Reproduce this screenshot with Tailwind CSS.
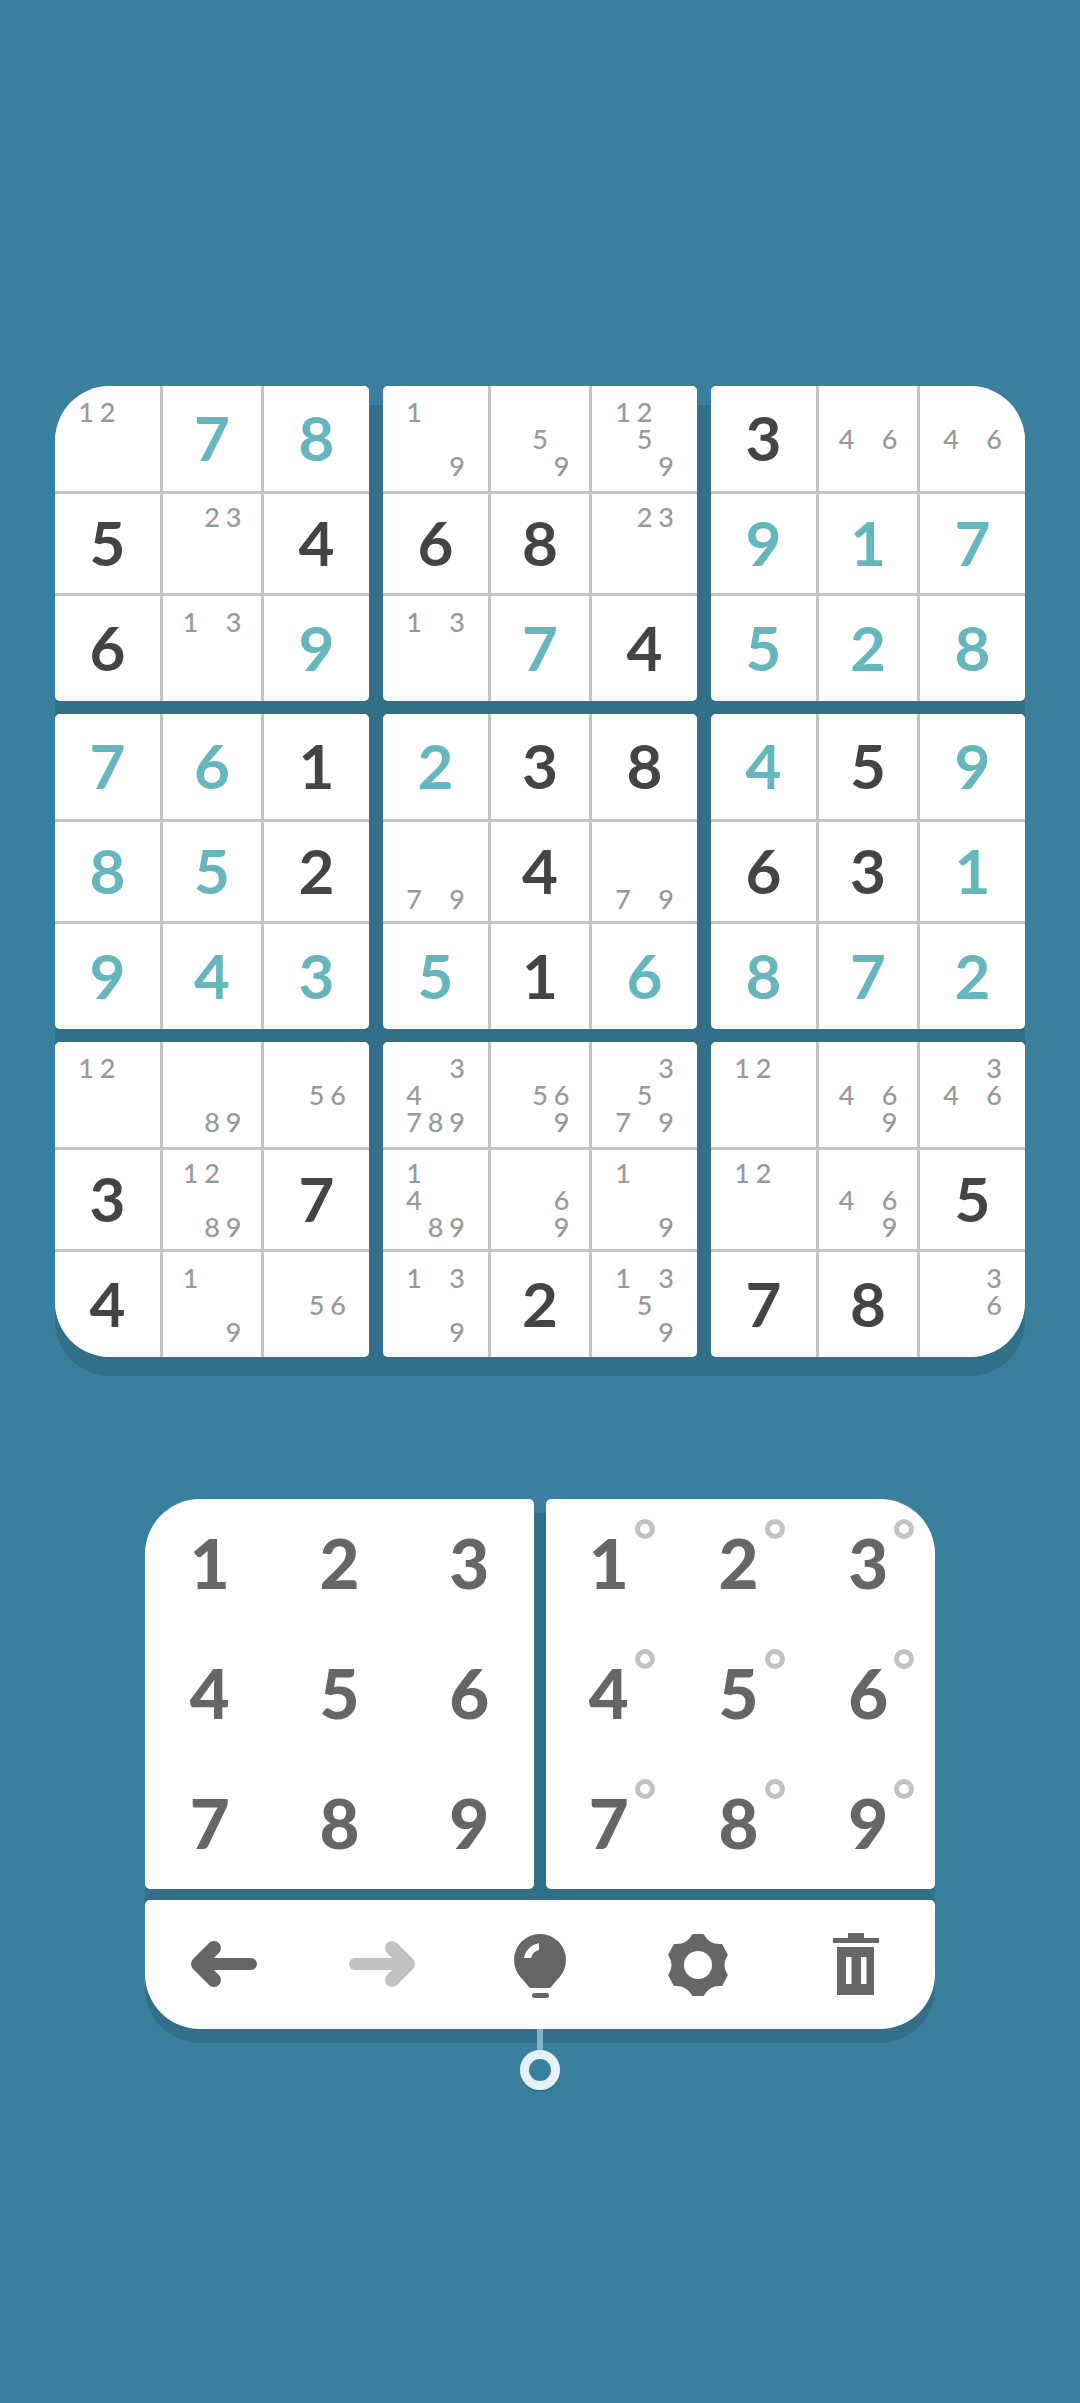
<!DOCTYPE html>
<html lang="en">
<head>
  <meta charset="UTF-8">
  <title>Sudoku</title>
  <script src="https://cdn.jsdelivr.net/npm/@tailwindcss/browser@4"></script>
</head>
<body class="bg-[#3a7f9e] font-['Lato',sans-serif]">
  <div class="h-[2403px] w-[1080px] overflow-hidden pt-[386px] pl-[55px]">

    <!-- board -->
    <div class="relative w-[970px]">
      <div class="absolute inset-x-0 top-[19px] -bottom-[19px] rounded-[55px] bg-[#327089]"></div>
      <div id="board" class="relative grid grid-cols-[314px_314px_314px] gap-x-[14px] gap-y-[13px]"></div>
    </div>

    <!-- number pad -->
    <div class="relative mt-[142px] ml-[90px] w-[790px]">
      <div class="absolute inset-x-0 top-[14px] -bottom-[14px] rounded-[55px] bg-[#327089]"></div>
      <div class="relative flex flex-col gap-[11px]">
        <div class="flex gap-[12px]">
          <div id="padLeft" class="grid h-[390px] w-[389px] grid-cols-3 grid-rows-3 rounded-[5px] rounded-tl-[55px] bg-white text-[69px] leading-none font-black text-[#666666]"></div>
          <div id="padRight" class="grid h-[390px] w-[389px] grid-cols-3 grid-rows-3 rounded-[5px] rounded-tr-[55px] bg-white text-[69px] leading-none font-black text-[#666666]"></div>
        </div>

        <!-- toolbar -->
        <div class="relative grid h-[129px] grid-cols-5 items-center justify-items-center rounded-[5px] rounded-b-[55px] bg-white">
          <svg class="w-[66px] h-[46px] -mt-[1px]" viewBox="0 0 66 46">
            <path d="M23 7 L7 23 L23 39" fill="none" stroke="#666666" stroke-width="14" stroke-linecap="round" stroke-linejoin="round"/>
            <path d="M8 23 H60" stroke="#666666" stroke-width="12" stroke-linecap="round"/>
          </svg>
          <svg class="w-[66px] h-[46px] -mt-[1px]" viewBox="0 0 66 46">
            <path d="M43 7 L59 23 L43 39" fill="none" stroke="#c2c2c2" stroke-width="14" stroke-linecap="round" stroke-linejoin="round"/>
            <path d="M58 23 H6" stroke="#c2c2c2" stroke-width="12" stroke-linecap="round"/>
          </svg>
          <svg class="w-[60px] h-[70px]" viewBox="0 0 60 70">
            <circle cx="30" cy="30" r="26" fill="#666666"/>
            <path d="M10 46 L18 56 Q19 58 21 58 H39 Q41 58 42 56 L50 46 Z" fill="#666666"/>
            <rect x="22" y="63" width="17" height="5" rx="2.5" fill="#666666"/>
            <path d="M14 28 Q16 16 29 13 L29 20 Q23 21 21 28 Z" fill="#ffffff"/>
          </svg>
          <svg class="w-[64px] h-[64px]" viewBox="-32 -32 64 64">
            <path fill="#666666" stroke="#666666" stroke-width="2" stroke-linejoin="round" fill-rule="evenodd" d="M-5 -30 L5 -30 Q11 -19 23.5 -20 L28.8 -10 Q22 0 28.8 10 L23.5 20 Q11 19 5 30 L-5 30 Q-11 19 -23.5 20 L-28.8 10 Q-22 0 -28.8 -10 L-23.5 -20 Q-11 -19 -5 -30 Z M15 0 A15 15 0 1 0 -15 0 A15 15 0 1 0 15 0 Z"/>
          </svg>
          <svg class="w-[46px] h-[63px]" viewBox="0 0 46 63">
            <path fill="#666666" d="M15 0 H31 V5 H46 V10 H0 V5 H15 Z"/>
            <path fill="#666666" fill-rule="evenodd" d="M4 14 H41 V62 H4 Z M13 24 V51 H18.5 V24 Z M28 24 V51 H33.5 V24 Z"/>
          </svg>

          <!-- hint marker under the toolbar -->
          <div class="absolute top-full left-[375px] flex w-[40px] flex-col items-center">
            <div class="h-[21px] w-[6px] bg-[#7db4c8]"></div>
            <div class="h-[40px] w-[40px] rounded-full border-[9px] border-[#e5f2f7] shadow-[0_2px_0_#327089]"></div>
          </div>
        </div>
      </div>
    </div>
  </div>

  <script>
    // t = teal (solved by player), d = dark (given), p = pencil marks
    const rows = [
      "p12 t7 t8 p19 p59 p1259 d3 p46 p46",
      "d5 p23 d4 d6 d8 p23 t9 t1 t7",
      "d6 p13 t9 p13 t7 d4 t5 t2 t8",
      "t7 t6 d1 t2 d3 d8 t4 d5 t9",
      "t8 t5 d2 p79 d4 p79 d6 d3 t1",
      "t9 t4 t3 t5 d1 t6 t8 t7 t2",
      "p12 p89 p56 p34789 p569 p3579 p12 p469 p346",
      "d3 p1289 d7 p1489 p69 p19 p12 p469 d5",
      "d4 p19 p56 p139 d2 p1359 d7 d8 p36"
    ].map(r => r.split(" "));

    const corners = {
      0: "rounded-tl-[55px]",
      2: "rounded-tr-[55px]",
      6: "rounded-bl-[55px]",
      8: "rounded-br-[55px]"
    };

    function cellHtml(c) {
      const val = c.slice(1);
      if (c[0] === "t") return `<div class="flex items-center justify-center bg-white pb-[3px] text-[62px] leading-none font-bold text-[#66b7bd]">${val}</div>`;
      if (c[0] === "d") return `<div class="flex items-center justify-center bg-white pb-[3px] text-[62px] leading-none font-bold text-[#444444]">${val}</div>`;
      let marks = "";
      for (let n = 1; n <= 9; n++) {
        marks += `<span class="flex items-center justify-center">${val.includes(n) ? n : ""}</span>`;
      }
      return `<div class="flex items-center justify-center bg-white"><div class="grid h-[81px] w-[64.5px] grid-cols-3 grid-rows-3 text-[27px] leading-[26px] font-medium text-[#999999]">${marks}</div></div>`;
    }

    let boardHtml = "";
    for (let b = 0; b < 9; b++) {
      const r0 = Math.floor(b / 3) * 3, c0 = (b % 3) * 3;
      let cells = "";
      for (let r = r0; r < r0 + 3; r++) {
        for (let c = c0; c < c0 + 3; c++) cells += cellHtml(rows[r][c]);
      }
      boardHtml += `<div class="grid h-[315px] grid-cols-[105px_98px_105px] grid-rows-[105px_99px_105px] gap-[3px] overflow-hidden rounded-[5px] bg-[#c4c4c4] ${corners[b] || ""}">${cells}</div>`;
    }
    document.getElementById("board").innerHTML = boardHtml;

    let left = "", right = "";
    for (let n = 1; n <= 9; n++) {
      left += `<div class="flex items-center justify-center pb-[3px]">${n}</div>`;
      right += `<div class="relative flex items-center justify-center pr-[4px] pb-[3px]">${n}<span class="absolute top-[20px] left-[89px] h-[20px] w-[20px] rounded-full border-[5px] border-[#c2c2c2]"></span></div>`;
    }
    document.getElementById("padLeft").innerHTML = left;
    document.getElementById("padRight").innerHTML = right;
  </script>
</body>
</html>
